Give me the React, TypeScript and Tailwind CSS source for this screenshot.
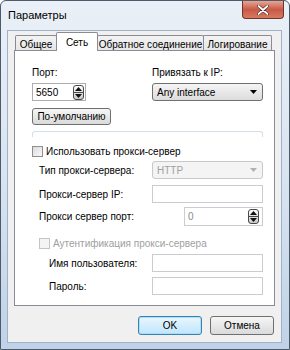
import React from "react";

function Spin() {
  return (
    <div className="w-[11px] h-[15px] border border-[#4a4a4a] rounded-[3px] bg-gradient-to-b from-[#ffffff] to-[#c8c8c8] flex flex-col items-center justify-between py-[1px]">
      <svg width="7" height="4" viewBox="0 0 7 4"><path d="M0 4 L3.5 0 L7 4Z" fill="#111" /></svg>
      <div className="w-full h-px bg-[#4a4a4a]" />
      <svg width="7" height="4" viewBox="0 0 7 4"><path d="M0 0 L3.5 4 L7 0Z" fill="#111" /></svg>
    </div>
  );
}

function Arrow({ color }: { color: string }) {
  return (
    <svg width="7" height="4" viewBox="0 0 7 4"><path d="M0 0 L3.5 4 L7 0Z" fill={color} /></svg>
  );
}

function Tab({ label, w, active }: { label: string; w: string; active?: boolean }) {
  return (
    <div
      className={
        active
          ? `${w} h-[19px] -ml-px relative z-10 bg-white border border-b-0 border-[#898c95] rounded-t-[2px] flex items-start justify-center pt-[2px] whitespace-nowrap`
          : `${w} h-[16px] -ml-px bg-gradient-to-b from-[#f3f3f3] to-[#e6e6e6] border border-b-0 border-[#898c95] rounded-t-[2px] flex items-start justify-center pt-[1px] whitespace-nowrap`
      }
    >
      {label}
    </div>
  );
}

export default function App() {
  return (
    <div className="w-[290px] h-[350px] relative overflow-hidden font-['Liberation_Sans',sans-serif] text-[10px] text-black whitespace-nowrap bg-gradient-to-b from-[#eaf0f7] via-[#d9e4f1] to-[#bfd2e7] border border-[#4d5a6a] rounded-t-[6px] flex flex-col">
      {/* title bar */}
      <div className="h-[29px] flex items-center pl-[7px] text-[11px] text-black">Параметры</div>
      <div className="absolute top-0 right-[5px] w-[42px] h-[18px] rounded-b-[4px] border border-t-0 border-[#6e3530] bg-gradient-to-b from-[#e8a594] via-[#c75a46] to-[#d9785f] flex items-center justify-center">
        <svg width="12" height="10" viewBox="0 0 12 10">
          <path d="M1.5 1 L10.5 9 M10.5 1 L1.5 9" stroke="#3a1a16" strokeWidth="3" strokeLinecap="round" />
          <path d="M1.5 1 L10.5 9 M10.5 1 L1.5 9" stroke="#ffffff" strokeWidth="1.8" strokeLinecap="round" />
        </svg>
      </div>

      {/* client */}
      <div className="ml-[6px] w-[275px] h-[313px] bg-[#f0f0f0] border border-[#9fb2c8] flex flex-col">
        {/* tabs */}
        <div className="flex items-end h-[20px] ml-[7px] -mb-px">
          <div className="ml-px" />
          <Tab label="Общее" w="w-[42px]" />
          <Tab label="Сеть" w="w-[42px]" active />
          <Tab label="Обратное соединение" w="w-[107px]" />
          <Tab label="Логирование" w="w-[69px]" />
        </div>
        {/* panel */}
        <div className="ml-[6px] w-[261px] h-[256px] bg-white border border-[#898c95] flex flex-col pl-[17px]">
          <div className="flex mt-[15px]">
            <div className="w-[120px] flex flex-col">
              <div className="h-[13px] leading-[13px]">Порт:</div>
              <div className="mt-[4px] w-[54px] h-[18px] border border-[#abadb3] flex items-center justify-between pl-[3px] pr-[1px]">
                <span>5650</span>
                <Spin />
              </div>
            </div>
            <div className="flex flex-col">
              <div className="h-[13px] leading-[13px]">Привязать к IP:</div>
              <div className="mt-[4px] w-[111px] h-[18px] border border-[#707070] rounded-[3px] bg-gradient-to-b from-[#f4f4f4] to-[#dcdcdc] flex items-center justify-between pl-[4px] pr-[5px]">
                <span>Any interface</span>
                <Arrow color="#000" />
              </div>
            </div>
          </div>
          <div className="mt-[7px] w-[79px] h-[17px] border border-[#707070] rounded-[3px] bg-gradient-to-b from-[#f6f6f6] to-[#dadada] flex items-center justify-center">
            По-умолчанию
          </div>
          <div className="mt-[6px] w-[231px] h-[6px] border border-b-0 border-[#d5dfe5] rounded-t-[3px]" />
          <div className="mt-[8px] flex items-center h-[13px]">
            <div className="w-[11px] h-[11px] border border-[#8f8f8f] bg-gradient-to-br from-[#dcdcdc] to-[#f8f8f8]" />
            <span className="ml-[3px]">Использовать прокси-сервер</span>
          </div>
          <div className="mt-[3px] flex items-center h-[18px]">
            <span className="w-[120px] pl-[7px]">Тип прокси-сервера:</span>
            <div className="w-[111px] h-[18px] border border-[#c9c9c9] rounded-[3px] bg-[#f4f4f4] flex items-center justify-between pl-[4px] pr-[5px] text-[#a0a0a0]">
              <span>HTTP</span>
              <Arrow color="#b0b0b0" />
            </div>
          </div>
          <div className="mt-[6px] flex items-center h-[18px]">
            <span className="w-[120px] pl-[7px]">Прокси-сервер IP:</span>
            <div className="w-[111px] h-[18px] border border-[#c9ccd0] bg-white" />
          </div>
          <div className="mt-[4px] flex items-center h-[19px]">
            <span className="w-[152px] pl-[7px]">Прокси сервер порт:</span>
            <div className="w-[79px] h-[19px] border border-[#c9ccd0] flex items-center justify-between pl-[3px] pr-[3px] text-[#8a8a8a]">
              <span>0</span>
              <Spin />
            </div>
          </div>
          <div className="mt-[11px] flex items-center h-[13px] pl-[7px] text-[#a0a0a0]">
            <div className="w-[11px] h-[11px] border border-[#c4c4c4] bg-[#f4f4f4]" />
            <span className="ml-[3px]">Аутентификация прокси-сервера</span>
          </div>
          <div className="mt-[4px] flex items-center h-[18px]">
            <span className="w-[120px] pl-[17px]">Имя пользователя:</span>
            <div className="w-[111px] h-[18px] border border-[#c9ccd0] bg-white" />
          </div>
          <div className="mt-[5px] flex items-center h-[18px]">
            <span className="w-[120px] pl-[17px]">Пароль:</span>
            <div className="w-[111px] h-[18px] border border-[#c9ccd0] bg-white" />
          </div>
        </div>
        {/* buttons */}
        <div className="mt-[10px] flex justify-end gap-[8px] pr-[7px]">
          <div className="w-[64px] h-[19px] border border-[#3c7fb1] rounded-[3px] bg-gradient-to-b from-[#eaf6fd] to-[#bee6fd] shadow-[inset_0_0_0_1px_#a6e0f9] flex items-center justify-center">OK</div>
          <div className="w-[64px] h-[19px] border border-[#707070] rounded-[3px] bg-gradient-to-b from-[#f6f6f6] to-[#dadada] flex items-center justify-center">Отмена</div>
        </div>
      </div>
    </div>
  );
}
